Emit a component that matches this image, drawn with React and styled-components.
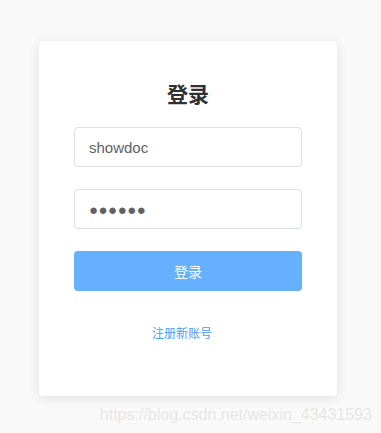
import styled, { createGlobalStyle } from "styled-components";

const GlobalStyle = createGlobalStyle`
  html, body {
    margin: 0;
    padding: 0;
    background: #f9f9f9;
    font-family: "Noto Sans CJK SC", "Liberation Sans", sans-serif;
  }
`

const Page = styled.div`
  position: relative;
  width: 381px;
  height: 433px;
  padding: 41px 0 0 39px;
  box-sizing: border-box;
  overflow: hidden;
`

const Card = styled.div`
  width: 298px;
  height: 355px;
  background: #fff;
  border-radius: 4px;
  box-shadow: 0 2px 12px 0 rgba(0, 0, 0, 0.1);
  box-sizing: border-box;
  padding: 37px 35px 0;
  display: flex;
  flex-direction: column;
  align-items: center;
`

const Title = styled.h2`
  margin: 0 0 19px;
  font-size: 21px;
  line-height: 30px;
  font-weight: bold;
  color: #303133;
`

const Input = styled.div`
  width: 228px;
  height: 40px;
  box-sizing: border-box;
  border: 1px solid #dcdfe6;
  border-radius: 4px;
  padding: 0 14px;
  display: flex;
  align-items: center;
  font-family: "Liberation Sans", "Noto Sans CJK SC", sans-serif;
  font-size: 15px;
  color: #606266;
  margin-bottom: 22px;
`

const Dots = styled.span`
  font-size: 15px;
  letter-spacing: 0.5px;
  color: #606266;
`

const Button = styled.button`
  width: 228px;
  height: 40px;
  border: none;
  border-radius: 4px;
  background: #66b1ff;
  color: #fff;
  font-family: "Noto Sans CJK SC", sans-serif;
  font-size: 14px;
  margin-bottom: 34px;
`

const Link = styled.a`
  margin-right: 12px;
  font-size: 12px;
  color: #409eff;
  text-decoration: none;
  line-height: 16px;
`

const Watermark = styled.div`
  position: absolute;
  right: 9px;
  bottom: 9px;
  font-family: "Liberation Sans", sans-serif;
  font-size: 16px;
  color: rgba(200, 200, 200, 0.4);
`

export default function App() {
  return (
    <Page>
      <GlobalStyle />
      <Card>
        <Title>登录</Title>
        <Input>showdoc</Input>
        <Input><Dots>●●●●●●</Dots></Input>
        <Button type="button">登录</Button>
        <Link href="#">注册新账号</Link>
      </Card>
      <Watermark>https://blog.csdn.net/weixin_43431593</Watermark>
    </Page>
  )
}
